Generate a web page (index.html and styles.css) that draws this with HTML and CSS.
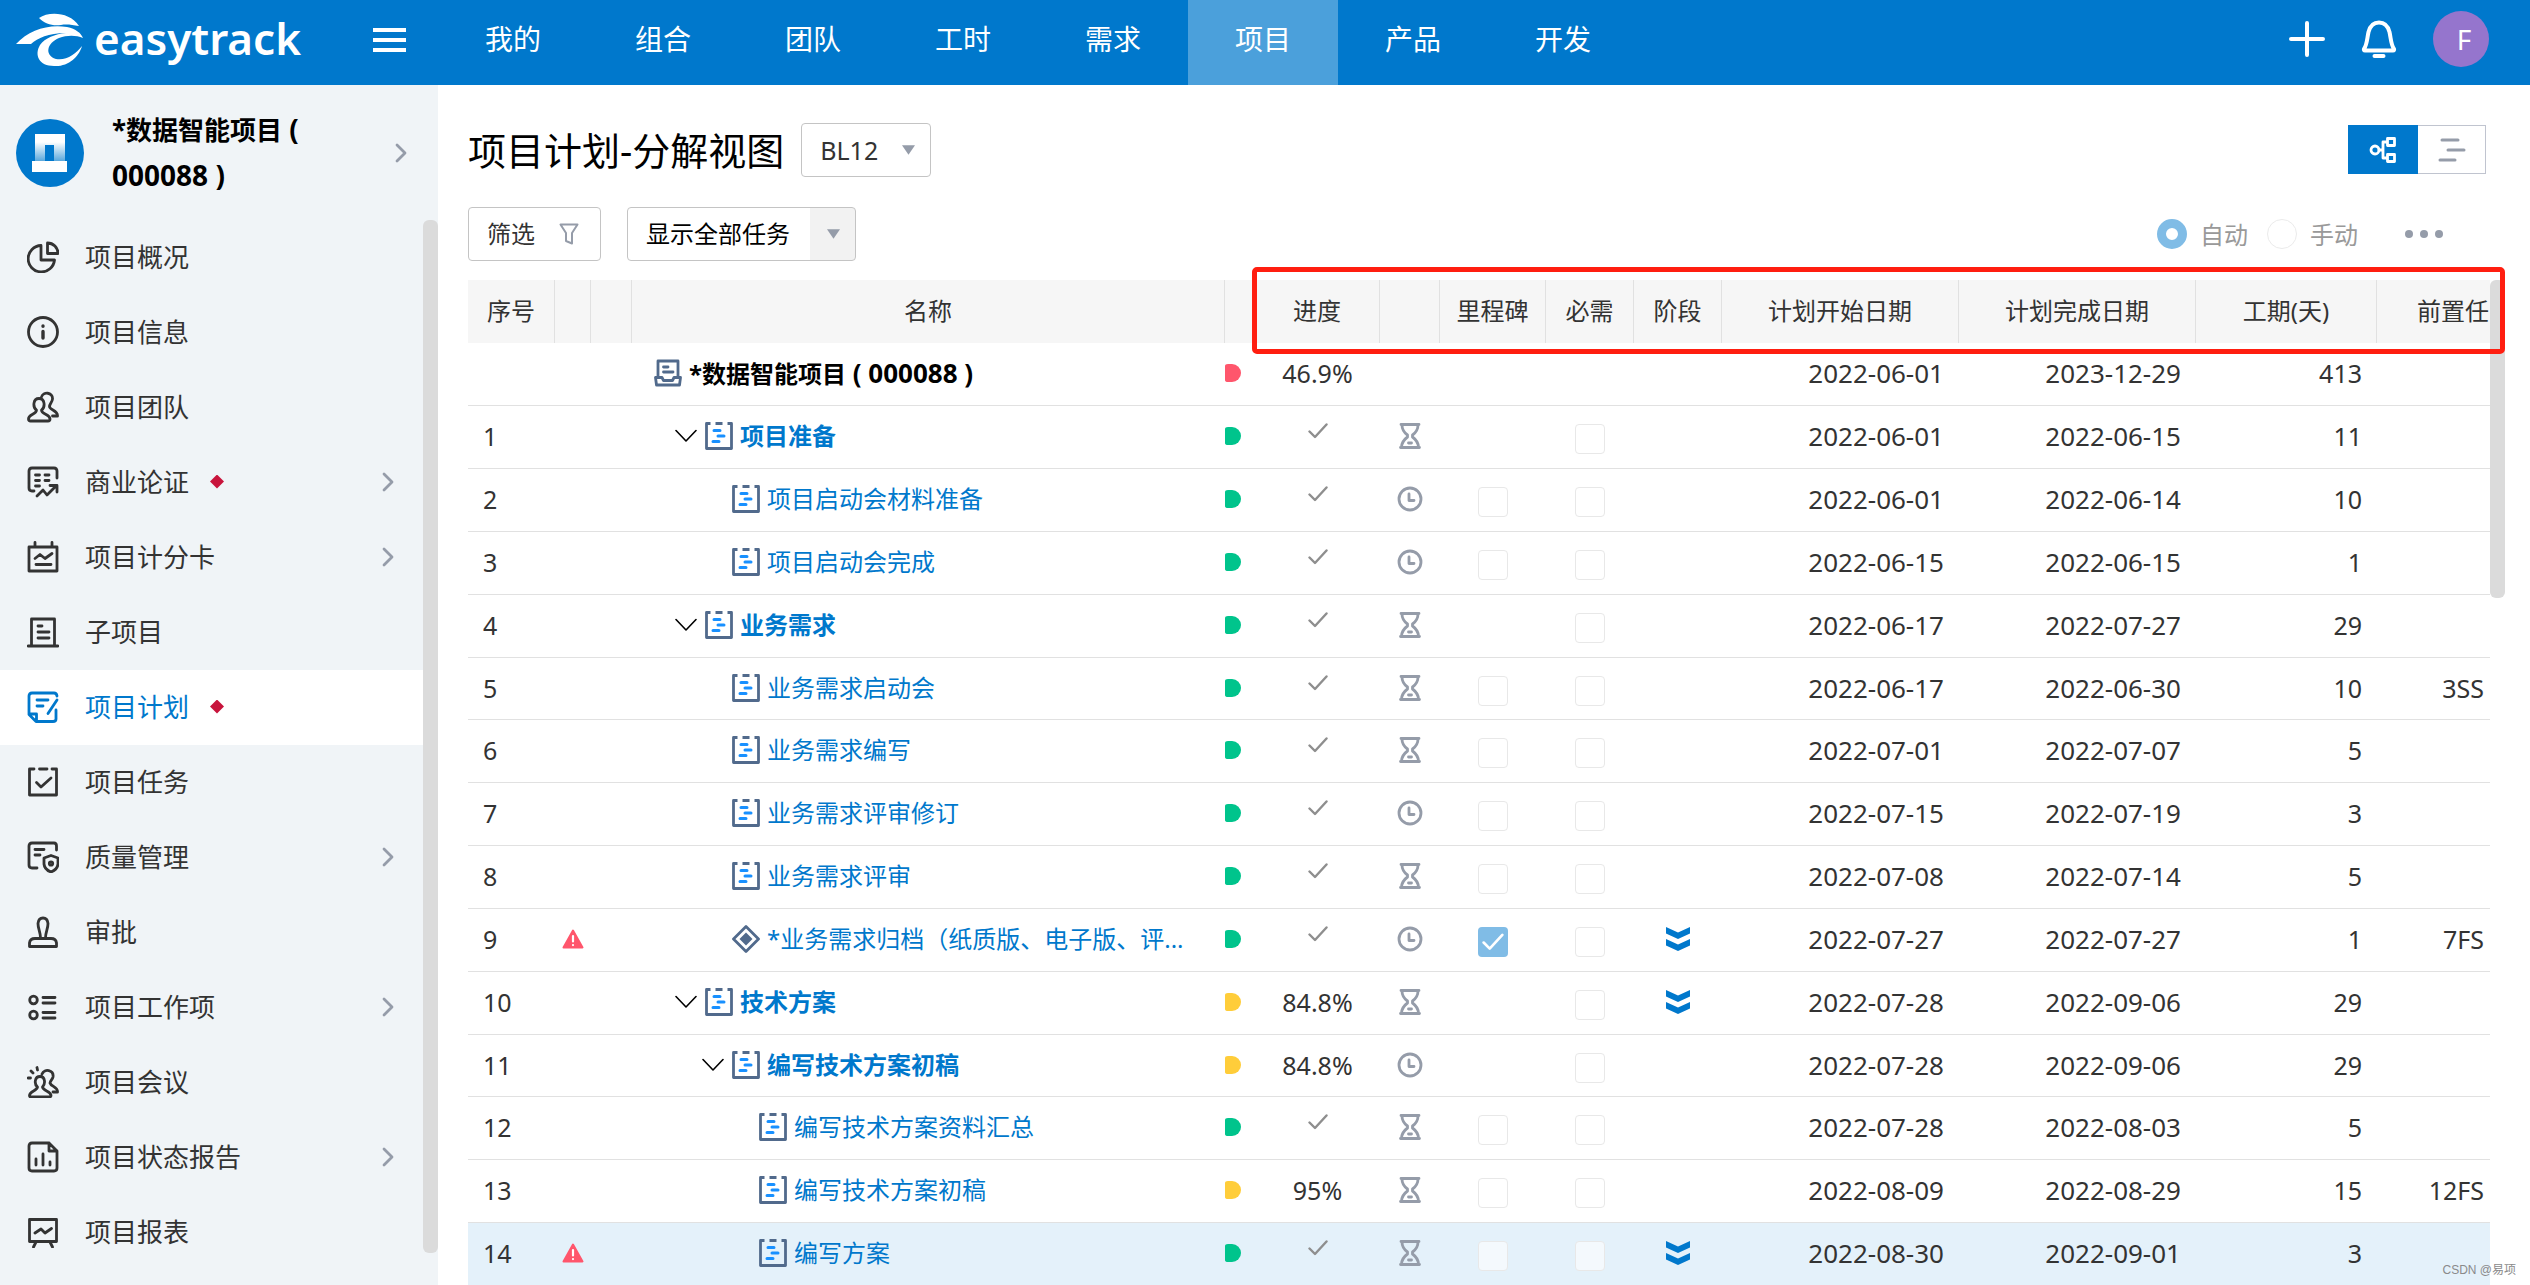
FILE: index.html
```html
<!DOCTYPE html>
<html lang="zh-CN">
<head>
<meta charset="utf-8">
<title>项目计划-分解视图</title>
<link rel="stylesheet" href="styles.css">
</head>
<body>
<svg class="sprite" aria-hidden="true">
  <symbol id="i-pie" viewBox="0 0 32 32"><path d="M14 4.500A13.200 13.200 0 1 0 27.500 19H14zM20.500 2V12.500H31A10.500 10.500 0 0 0 20.500 2z"/></symbol>
  <symbol id="i-info" viewBox="0 0 32 32"><circle cx="16" cy="16" r="14.500"/><path d="M16 15.500V22M16 10V10.200" stroke-width="3.400"/></symbol>
  <symbol id="i-team" viewBox="0 0 32 32"><path d="M9.500 19C5.500 16 6 7.500 12 7.500S18.500 16 14.500 19C14.500 23.500 23 23 23 28Q23 30 21 30H3.500Q1.500 30 1.500 28C1.500 23 9.500 23.500 9.500 19zM14.500 6C16 .5 26 .8 25.500 8C25.300 11 22.500 13 22.500 15.500C22.500 19 31 19.500 30.500 25H25.500"/></symbol>
  <symbol id="i-biz" viewBox="0 0 32 32"><path d="M30 12V5Q30 2 27 2H5Q2 2 2 5V22Q2 25 5 25H7M8.500 9H12.500M18 9H22M8.500 14.500H12.500M18 14.500H22M8.500 20H12.500M10 30L16 24L20 29L29 20M23 19.500H30V26"/></symbol>
  <symbol id="i-score" viewBox="0 0 32 32"><path d="M2 6H30V30H2zM8 1.500V6M25 1.500V6M8 17.500L13 13.500L18 17.500L25 12.500M9 23.500H24"/></symbol>
  <symbol id="i-sub" viewBox="0 0 32 32"><path d="M4.500 30V3H27.500V30M1 30H31M11 10H15M11 16H22M11 22H22"/></symbol>
  <symbol id="i-plan" viewBox="0 0 32 32"><path d="M30 5Q29.500 2 27 2H5Q2 2 2 5V23.500L9 30.500H26Q29 30.500 29 28V19M3 23H9.500V30M10 9H21M10 15H16M30 9L21 22.500"/></symbol>
  <symbol id="i-task" viewBox="0 0 32 32"><path d="M7 3H2.500V29H29.500V3H25M12.500 3H20M9.500 16.500L14 21L24 12"/></symbol>
  <symbol id="i-quality" viewBox="0 0 32 32"><path d="M29.500 9V5Q29.500 2 27 2H5Q2 2 2 5V24Q2 27 5 27H10M8 8.500H17M8 14H13M24 14.500L31 17V23Q30.500 28.500 24 31Q17.500 28.500 17 23V17z"/><circle cx="24" cy="22.500" r="1.700"/></symbol>
  <symbol id="i-stamp" viewBox="0 0 32 32"><path d="M13.500 22C13.500 16 11 13 11 7.500Q11.500 2 16 2T21 7.500C21 13 18.500 16 18.500 22M2.500 30.500V27Q3 22.500 8 22.500H24Q29 22.500 29.500 27V30.500z"/></symbol>
  <symbol id="i-items" viewBox="0 0 32 32"><circle cx="6.500" cy="9" r="3.800"/><circle cx="6.500" cy="24" r="3.800"/><path d="M16 6.500H28M16 12H28M16 21.500H28M16 27H28"/></symbol>
  <symbol id="i-meet" viewBox="0 0 32 32"><path d="M10.500 21C7 18 7.500 10.500 13 10.500S18.500 18 15.500 21C16 25 24 25 24 29.500Q24 31 22 31H4Q2.500 31 2.500 29.500C2.500 25 10 25 10.500 21zM15 8C17.500 2 27 4 26 11C25.500 13.500 23 15 23 17C24 20.500 31 21 30.500 26H26M10 1.500L10.500 4M4 5L6 7M1 12H3.500"/></symbol>
  <symbol id="i-status" viewBox="0 0 32 32"><path d="M22 2H5Q2 2 2 5V27Q2 30 5 30H27Q30 30 30 27V10zV10H30M9 18V24M16 13V24M23 21V24"/></symbol>
  <symbol id="i-report" viewBox="0 0 32 32"><path d="M2.500 3.500H29.500V25.500H2.500zM9 26L6.500 31M23 26L25.500 31M8 17L14 13L18 17L24.500 12.500"/></symbol>
  <symbol id="i-right" viewBox="0 0 12 20"><path d="M2 2L10 10L2 18"/></symbol>
  <symbol id="i-down" viewBox="0 0 22 14"><path d="M1 1.500L11 12L21 1.500" stroke-width="1.600"/></symbol>
  <symbol id="i-caret" viewBox="0 0 14 10"><path d="M0 0H14L7 10z" fill="currentColor" stroke="none"/></symbol>
  <symbol id="i-wbs" viewBox="0 0 28 28"><path d="M5.500 1.500H1.500V26.500H26.500V1.500H22.500M10.500 1.500H17.500" stroke="#516a8c" stroke-width="2.800" stroke-linecap="butt"/><path d="M9 8.500H15M13 14H19M8 19.500H14" stroke="#1890ff" stroke-width="3"/></symbol>
  <symbol id="i-root" viewBox="0 0 28 28"><path d="M4 18V2H24V18M1.500 18.500H8L9.500 21.500H18.500L20 18.500H26.500L25.500 26H2.500zM9.500 8H14M9.500 13H19"/></symbol>
  <symbol id="i-mile" viewBox="0 0 28 28"><path d="M14 1.500L26.500 14L14 26.500L1.500 14z"/><path d="M14 7.500L20.500 14L14 20.500L7.500 14z" fill="currentColor" stroke="none"/></symbol>
  <symbol id="i-tick" viewBox="0 0 20 16"><path d="M1.500 8.500L7 14L18.500 1.500" stroke-width="2.400"/></symbol>
  <symbol id="i-glass" viewBox="0 0 22 26"><path d="M2 1.500H20M3 2Q3 8 8.500 12V14Q3 18 2.500 24M19 2Q19 8 13.500 12V14Q19 18 19.500 24M1.500 24.500H20.500M9.500 20H12.500"/></symbol>
  <symbol id="i-clock" viewBox="0 0 26 26"><circle cx="13" cy="13" r="11"/><path d="M12 8V14.500H17"/></symbol>
  <symbol id="i-phase" viewBox="0 0 24 24"><path d="M0 0L12 5.500L24 0V6.500L12 12L0 6.500zM0 12L12 17.500L24 12V18.500L12 24L0 18.500z" fill="currentColor" stroke="none"/></symbol>
  <symbol id="i-warn" viewBox="0 0 22 20"><path d="M11 1.500L20.500 18.500H1.500z" fill="#ff566c" stroke="#ff566c" stroke-width="2"/><path d="M11 7V12.500M11 16V16.100" stroke="#fff" stroke-width="2.200"/></symbol>
</svg>

<div class="app">
  <header class="topbar">
    <div class="brand">
      <a class="logo" href="#" aria-label="easytrack">
        <svg width="68" height="54" viewBox="0 0 68 54"><g fill="#fff"><path d="M23 5C33-2 54-1 63 13C56 12 51 11 45 12C36 13 29 11 23 5z"/><path d="M0 31C13 17 32 11 51 14C60 16 65 20 67 25C60 22 51 22 43 25C31 30 28 42 40 46C50 48 60 41 66 33C63 44 52 54 38 53C23 53 18 42 24 32C29 25 39 21 50 20C32 20 22 25 15 31z"/></g></svg>
        <span class="logo-text">easytrack</span>
      </a>
      <button class="menu-btn" aria-label="菜单"><i></i><i></i><i></i></button>
    </div>
    <nav class="topnav">
      <a href="#">我的</a><a href="#">组合</a><a href="#">团队</a><a href="#">工时</a><a href="#">需求</a><a href="#" class="on">项目</a><a href="#">产品</a><a href="#">开发</a>
    </nav>
    <div class="tools">
      <button aria-label="新建"><svg class="ic" width="36" height="36" viewBox="0 0 36 36"><path d="M18 2V34M2 18H34" stroke-width="4"/></svg></button>
      <button aria-label="通知"><svg class="ic" width="36" height="38" viewBox="0 0 36 38"><path d="M3 29C6 25 6 19 7.500 12Q10 2.500 18 2.500T28.500 12C30 19 30 25 33 29Q33.500 30.500 32 30.500H4Q2.500 30.500 3 29zM13.500 36H22.500" stroke-width="4"/></svg></button>
      <button class="avatar">F</button>
    </div>
  </header>

  <div class="body">
    <aside class="sidebar">
      <a class="project" href="#">
        <svg width="68" height="68" viewBox="0 0 68 68"><defs><linearGradient id="g" x2="0" y2="1"><stop offset=".3" stop-color="#fff"/><stop offset="1" stop-color="#5aa8dd"/></linearGradient></defs><circle cx="34" cy="34" r="34" fill="#0078cc"/><path d="M19 15H49V42H38V26H29V42H19z" fill="url(#g)"/><path d="M16 42H51V53H16z" fill="#fff"/></svg>
        <b class="project-name">*数据智能项目<span class="latin"> (<br>000088 )</span></b>
        <svg class="ic go" width="14" height="22"><use href="#i-right"/></svg>
      </a>
      <div class="side-scroll">
        <nav class="menu">
          <a href="#"><svg class="ic mi"><use href="#i-pie"/></svg><span>项目概况</span></a>
          <a href="#"><svg class="ic mi"><use href="#i-info"/></svg><span>项目信息</span></a>
          <a href="#"><svg class="ic mi"><use href="#i-team"/></svg><span>项目团队</span></a>
          <a href="#"><svg class="ic mi"><use href="#i-biz"/></svg><span>商业论证</span><i class="mark"></i><svg class="ic go"><use href="#i-right"/></svg></a>
          <a href="#"><svg class="ic mi"><use href="#i-score"/></svg><span>项目计分卡</span><svg class="ic go"><use href="#i-right"/></svg></a>
          <a href="#"><svg class="ic mi"><use href="#i-sub"/></svg><span>子项目</span></a>
          <a href="#" class="on"><svg class="ic mi"><use href="#i-plan"/></svg><span>项目计划</span><i class="mark"></i></a>
          <a href="#"><svg class="ic mi"><use href="#i-task"/></svg><span>项目任务</span></a>
          <a href="#"><svg class="ic mi"><use href="#i-quality"/></svg><span>质量管理</span><svg class="ic go"><use href="#i-right"/></svg></a>
          <a href="#"><svg class="ic mi"><use href="#i-stamp"/></svg><span>审批</span></a>
          <a href="#"><svg class="ic mi"><use href="#i-items"/></svg><span>项目工作项</span><svg class="ic go"><use href="#i-right"/></svg></a>
          <a href="#"><svg class="ic mi"><use href="#i-meet"/></svg><span>项目会议</span></a>
          <a href="#"><svg class="ic mi"><use href="#i-status"/></svg><span>项目状态报告</span><svg class="ic go"><use href="#i-right"/></svg></a>
          <a href="#"><svg class="ic mi"><use href="#i-report"/></svg><span>项目报表</span></a>
        </nav>
        <div class="bar side-bar"></div>
      </div>
    </aside>

    <main class="main">
      <div class="title-row">
        <h1>项目计划-分解视图</h1>
        <div class="pick pick-base">
          <select aria-label="基线"><option>BL12</option></select>
          <svg class="caret"><use href="#i-caret"/></svg>
        </div>
        <div class="views">
          <button class="on" aria-label="分解视图"><svg class="ic" width="28" height="28" viewBox="0 0 28 28"><circle cx="6" cy="14" r="4"/><path d="M10 14H14M18 6H14V22H18M18.500 2.500H25.500V9.500H18.500zM18.500 18.500H25.500V25.500H18.500z"/></svg></button>
          <button aria-label="甘特图"><svg class="ic" width="28" height="28" viewBox="0 0 28 28"><path d="M4 4H20M10 14H26M2 24H17" stroke-width="3"/></svg></button>
        </div>
      </div>
      <div class="toolbar">
        <button class="filter">筛选<svg class="ic" width="20" height="22" viewBox="0 0 20 22"><path d="M1.500 1.500H18.500L13 10V20.500L7 18V10z" stroke-width="2"/></svg></button>
        <div class="pick pick-scope">
          <select aria-label="任务范围"><option>显示全部任务</option></select>
          <svg class="caret"><use href="#i-caret"/></svg>
        </div>
        <div class="modes">
          <input type="radio" name="mode" id="auto" checked disabled><label for="auto">自动</label>
          <input type="radio" name="mode" id="manual" disabled><label for="manual">手动</label>
          <button class="more" aria-label="更多"><i></i><i></i><i></i></button>
        </div>
      </div>

      <div class="grid">
        <div class="grid-clip">
        <table>
          <colgroup><col class="w-no"><col class="w-a"><col class="w-b"><col><col class="w-st"><col class="w-pr"><col class="w-ty"><col class="w-ms"><col class="w-ph"><col class="w-ph"><col class="w-d"><col class="w-d"><col class="w-du"><col class="w-pre"></colgroup>
          <thead><tr><th>序号</th><th></th><th></th><th>名称</th><th></th><th>进度</th><th></th><th>里程碑</th><th>必需</th><th>阶段</th><th>计划开始日期</th><th>计划完成日期</th><th>工期(天)</th><th class="pre">前置任</th></tr></thead>
          <tbody>
          <tr><td></td><td></td><td></td><td><div class="name root"><svg class="ic ti"><use href="#i-root"/></svg><b>*数据智能项目<span class="latin"> ( 000088 )</span></b></div></td><td><i class="st red"></i></td><td>46.9%</td><td></td><td></td><td></td><td></td><td>2022-06-01</td><td>2023-12-29</td><td>413</td><td></td></tr>
          <tr><td>1</td><td></td><td></td><td><div class="name l1"><svg class="ic dn"><use href="#i-down"/></svg><svg class="ic ti"><use href="#i-wbs"/></svg><a href="#"><b>项目准备</b></a></div></td><td><i class="st"></i></td><td><svg class="ic tick"><use href="#i-tick"/></svg></td><td><svg class="ic ty"><use href="#i-glass"/></svg></td><td></td><td><input type="checkbox" aria-label="必需" disabled></td><td></td><td>2022-06-01</td><td>2022-06-15</td><td>11</td><td></td></tr>
          <tr><td>2</td><td></td><td></td><td><div class="name l2"><svg class="ic ti"><use href="#i-wbs"/></svg><a href="#">项目启动会材料准备</a></div></td><td><i class="st"></i></td><td><svg class="ic tick"><use href="#i-tick"/></svg></td><td><svg class="ic ty"><use href="#i-clock"/></svg></td><td><input type="checkbox" aria-label="里程碑" disabled></td><td><input type="checkbox" aria-label="必需" disabled></td><td></td><td>2022-06-01</td><td>2022-06-14</td><td>10</td><td></td></tr>
          <tr><td>3</td><td></td><td></td><td><div class="name l2"><svg class="ic ti"><use href="#i-wbs"/></svg><a href="#">项目启动会完成</a></div></td><td><i class="st"></i></td><td><svg class="ic tick"><use href="#i-tick"/></svg></td><td><svg class="ic ty"><use href="#i-clock"/></svg></td><td><input type="checkbox" aria-label="里程碑" disabled></td><td><input type="checkbox" aria-label="必需" disabled></td><td></td><td>2022-06-15</td><td>2022-06-15</td><td>1</td><td></td></tr>
          <tr><td>4</td><td></td><td></td><td><div class="name l1"><svg class="ic dn"><use href="#i-down"/></svg><svg class="ic ti"><use href="#i-wbs"/></svg><a href="#"><b>业务需求</b></a></div></td><td><i class="st"></i></td><td><svg class="ic tick"><use href="#i-tick"/></svg></td><td><svg class="ic ty"><use href="#i-glass"/></svg></td><td></td><td><input type="checkbox" aria-label="必需" disabled></td><td></td><td>2022-06-17</td><td>2022-07-27</td><td>29</td><td></td></tr>
          <tr><td>5</td><td></td><td></td><td><div class="name l2"><svg class="ic ti"><use href="#i-wbs"/></svg><a href="#">业务需求启动会</a></div></td><td><i class="st"></i></td><td><svg class="ic tick"><use href="#i-tick"/></svg></td><td><svg class="ic ty"><use href="#i-glass"/></svg></td><td><input type="checkbox" aria-label="里程碑" disabled></td><td><input type="checkbox" aria-label="必需" disabled></td><td></td><td>2022-06-17</td><td>2022-06-30</td><td>10</td><td>3SS</td></tr>
          <tr><td>6</td><td></td><td></td><td><div class="name l2"><svg class="ic ti"><use href="#i-wbs"/></svg><a href="#">业务需求编写</a></div></td><td><i class="st"></i></td><td><svg class="ic tick"><use href="#i-tick"/></svg></td><td><svg class="ic ty"><use href="#i-glass"/></svg></td><td><input type="checkbox" aria-label="里程碑" disabled></td><td><input type="checkbox" aria-label="必需" disabled></td><td></td><td>2022-07-01</td><td>2022-07-07</td><td>5</td><td></td></tr>
          <tr><td>7</td><td></td><td></td><td><div class="name l2"><svg class="ic ti"><use href="#i-wbs"/></svg><a href="#">业务需求评审修订</a></div></td><td><i class="st"></i></td><td><svg class="ic tick"><use href="#i-tick"/></svg></td><td><svg class="ic ty"><use href="#i-clock"/></svg></td><td><input type="checkbox" aria-label="里程碑" disabled></td><td><input type="checkbox" aria-label="必需" disabled></td><td></td><td>2022-07-15</td><td>2022-07-19</td><td>3</td><td></td></tr>
          <tr><td>8</td><td></td><td></td><td><div class="name l2"><svg class="ic ti"><use href="#i-wbs"/></svg><a href="#">业务需求评审</a></div></td><td><i class="st"></i></td><td><svg class="ic tick"><use href="#i-tick"/></svg></td><td><svg class="ic ty"><use href="#i-glass"/></svg></td><td><input type="checkbox" aria-label="里程碑" disabled></td><td><input type="checkbox" aria-label="必需" disabled></td><td></td><td>2022-07-08</td><td>2022-07-14</td><td>5</td><td></td></tr>
          <tr><td>9</td><td><svg class="ic warn"><use href="#i-warn"/></svg></td><td></td><td><div class="name l2"><svg class="ic ti"><use href="#i-mile"/></svg><a href="#">*业务需求归档（纸质版、电子版、评...</a></div></td><td><i class="st"></i></td><td><svg class="ic tick"><use href="#i-tick"/></svg></td><td><svg class="ic ty"><use href="#i-clock"/></svg></td><td><span class="checked"><input type="checkbox" aria-label="里程碑" checked disabled><svg class="ic"><use href="#i-tick"/></svg></span></td><td><input type="checkbox" aria-label="必需" disabled></td><td><svg class="ic phase"><use href="#i-phase"/></svg></td><td>2022-07-27</td><td>2022-07-27</td><td>1</td><td>7FS</td></tr>
          <tr><td>10</td><td></td><td></td><td><div class="name l1"><svg class="ic dn"><use href="#i-down"/></svg><svg class="ic ti"><use href="#i-wbs"/></svg><a href="#"><b>技术方案</b></a></div></td><td><i class="st amber"></i></td><td>84.8%</td><td><svg class="ic ty"><use href="#i-glass"/></svg></td><td></td><td><input type="checkbox" aria-label="必需" disabled></td><td><svg class="ic phase"><use href="#i-phase"/></svg></td><td>2022-07-28</td><td>2022-09-06</td><td>29</td><td></td></tr>
          <tr><td>11</td><td></td><td></td><td><div class="name l1 deep"><svg class="ic dn"><use href="#i-down"/></svg><svg class="ic ti"><use href="#i-wbs"/></svg><a href="#"><b>编写技术方案初稿</b></a></div></td><td><i class="st amber"></i></td><td>84.8%</td><td><svg class="ic ty"><use href="#i-clock"/></svg></td><td></td><td><input type="checkbox" aria-label="必需" disabled></td><td></td><td>2022-07-28</td><td>2022-09-06</td><td>29</td><td></td></tr>
          <tr><td>12</td><td></td><td></td><td><div class="name l3"><svg class="ic ti"><use href="#i-wbs"/></svg><a href="#">编写技术方案资料汇总</a></div></td><td><i class="st"></i></td><td><svg class="ic tick"><use href="#i-tick"/></svg></td><td><svg class="ic ty"><use href="#i-glass"/></svg></td><td><input type="checkbox" aria-label="里程碑" disabled></td><td><input type="checkbox" aria-label="必需" disabled></td><td></td><td>2022-07-28</td><td>2022-08-03</td><td>5</td><td></td></tr>
          <tr><td>13</td><td></td><td></td><td><div class="name l3"><svg class="ic ti"><use href="#i-wbs"/></svg><a href="#">编写技术方案初稿</a></div></td><td><i class="st amber"></i></td><td>95%</td><td><svg class="ic ty"><use href="#i-glass"/></svg></td><td><input type="checkbox" aria-label="里程碑" disabled></td><td><input type="checkbox" aria-label="必需" disabled></td><td></td><td>2022-08-09</td><td>2022-08-29</td><td>15</td><td>12FS</td></tr>
          <tr class="hover"><td>14</td><td><svg class="ic warn"><use href="#i-warn"/></svg></td><td></td><td><div class="name l3"><svg class="ic ti"><use href="#i-wbs"/></svg><a href="#">编写方案</a></div></td><td><i class="st"></i></td><td><svg class="ic tick"><use href="#i-tick"/></svg></td><td><svg class="ic ty"><use href="#i-glass"/></svg></td><td><input type="checkbox" aria-label="里程碑" disabled></td><td><input type="checkbox" aria-label="必需" disabled></td><td><svg class="ic phase"><use href="#i-phase"/></svg></td><td>2022-08-30</td><td>2022-09-01</td><td>3</td><td></td></tr>
          </tbody>
        </table>
        </div>
        <div class="bar grid-bar"></div>
        <div class="callout"></div>
      </div>
    </main>
  </div>
  <div class="watermark">CSDN @易项</div>
</div>
</body>
</html>
```
FILE: styles.css
```css
:root {
  --blue: #0078cc;
  --grey: #959ca9;
  --line: #e1e1e1;
  --ink: #333;
}

* { box-sizing: border-box; }

body {
  margin: 0;
  background: #fff;
  color: var(--ink);
  font: 24px/32px "Noto Sans", "Noto Sans CJK SC", sans-serif;
}

a { color: inherit; text-decoration: none; }

button, select, input {
  margin: 0;
  padding: 0;
  font: inherit;
  color: inherit;
  appearance: none;
  background: none;
  border: 0;
}

.sprite { display: none; }

.ic {
  display: block;
  flex: none;
  fill: none;
  stroke: currentColor;
  stroke-width: 2.8;
  stroke-linecap: round;
  stroke-linejoin: round;
}

.latin { font-size: 26px; }

.app {
  position: relative;
  display: flex;
  flex-direction: column;
  height: 100vh;
  overflow: hidden;
}

/* top bar */
.topbar {
  display: flex;
  align-items: center;
  flex: none;
  height: 85px;
  background: var(--blue);
  color: #fff;
}

.brand {
  display: flex;
  align-items: center;
  justify-content: space-between;
  width: 438px;
  padding: 0 32px 6px 16px;
}

.logo { display: flex; align-items: center; gap: 10px; }

.logo-text { padding-bottom: 3px; font-size: 44px; line-height: 54px; font-weight: 600; }

.menu-btn { display: grid; gap: 6px; width: 33px; }

.menu-btn i { height: 4px; background: #fff; }

.topnav { display: flex; flex: 1; align-self: stretch; }

.topnav a {
  display: grid;
  place-items: center;
  width: 150px;
  padding-bottom: 8px;
  font-size: 28px;
}

.topnav .on { background: #4ba0db; }

.tools {
  display: flex;
  align-items: center;
  gap: 36px;
  padding: 0 41px 8px 0;
}

.avatar {
  width: 56px;
  height: 56px;
  padding-left: 6px;
  border-radius: 50%;
  background: #9575cd;
  font-size: 28px;
}

.body { display: flex; flex: 1; min-height: 0; }

/* sidebar */
.sidebar {
  display: flex;
  flex-direction: column;
  flex: none;
  width: 438px;
  background: #f0f4f7;
}

.project {
  display: flex;
  align-items: center;
  flex: none;
  height: 135px;
  padding: 0 31px 0 16px;
  color: #000;
}

.project-name {
  margin-left: 28px;
  font-size: 26px;
  line-height: 45px;
}

.project-name .latin { font-size: 28px; }

.go { width: 12px; height: 20px; margin-left: auto; color: var(--grey); }

.side-scroll { display: flex; flex: 1; min-height: 0; overflow: hidden; }

.menu { flex: 1; }

.menu a {
  display: flex;
  align-items: center;
  height: 75px;
  padding: 0 29px 2px 27px;
  font-size: 26px;
}

.menu .on { background: #fff; color: var(--blue); }

.mi { width: 32px; height: 32px; margin-right: 26px; }

.mark {
  width: 14px;
  height: 14px;
  margin-left: 21px;
  background: #c8143c;
  clip-path: polygon(50% 0, 100% 50%, 50% 100%, 0 50%);
}

.bar { width: 15px; border-radius: 6px; background: #dbdbdb; }

.side-bar { margin-bottom: 32px; }

/* main area */
.main {
  display: flex;
  flex-direction: column;
  flex: 1;
  min-width: 0;
  padding: 37px 25px 0 30px;
}

.title-row { display: flex; align-items: center; flex: none; height: 55px; }

h1 {
  margin: 0 17px 0 0;
  color: #000;
  font-size: 38px;
  font-weight: 400;
  line-height: 54px;
}

.pick { position: relative; display: flex; height: 54px; }

.pick select {
  width: 100%;
  padding: 0 18px;
  border: 1px solid #c4c4c4;
  border-radius: 4px;
}

.pick-base { width: 130px; }

.pick-base select { font-size: 25px; }

.pick-scope { width: 229px; margin-left: 26px; }

.pick-scope select {
  color: #000;
  background: linear-gradient(#f2f2f2, #f2f2f2) right / 45px no-repeat;
}

.caret {
  position: absolute;
  top: 22px;
  right: 16px;
  width: 13px;
  height: 10px;
  color: var(--grey);
  pointer-events: none;
}

.views { display: flex; height: 49px; margin: 0 19px 0 auto; }

.views button {
  display: grid;
  place-items: center;
  width: 68px;
  border: 1px solid #c0c4cf;
  border-left: 0;
  color: var(--grey);
}

.views .on { width: 70px; border: 0; background: var(--blue); color: #fff; }

.toolbar { display: flex; align-items: center; flex: none; margin: 30px 0 19px; }

.filter {
  display: flex;
  align-items: center;
  gap: 24px;
  height: 54px;
  padding: 0 21px 0 18px;
  border: 1px solid #c4c4c4;
  border-radius: 4px;
}

.filter .ic { color: var(--grey); }

.modes { display: flex; align-items: center; margin-left: auto; color: #999; }

.modes input {
  width: 30px;
  height: 30px;
  border: 1px solid #ebebeb;
  border-radius: 50%;
}

.modes input:checked { border: 9px solid #80bce6; }

.modes label { margin: 2px 19px 0 13px; }

.more { display: flex; gap: 7px; margin: 0 62px 0 28px; }

.more i { width: 8px; height: 8px; border-radius: 50%; background: var(--grey); }

/* task grid */
.grid { position: relative; display: flex; flex: 1; min-height: 0; }

.grid-clip { flex: 1; min-width: 0; overflow: hidden; }

.grid-bar { height: 318px; }

.callout {
  position: absolute;
  top: -13px;
  right: 0;
  width: 1253px;
  height: 87px;
  border: 5px solid #ff1e10;
  border-radius: 5px;
  pointer-events: none;
}

table {
  width: 100%;
  table-layout: fixed;
  border-collapse: separate;
  border-spacing: 0;
}

.w-no { width: 87px; }
.w-a { width: 36px; }
.w-b { width: 41px; }
.w-st { width: 30px; }
.w-pr { width: 125px; }
.w-ty { width: 60px; }
.w-ms { width: 106px; }
.w-ph { width: 88px; }
.w-d { width: 237px; }
.w-du { width: 181px; }
.w-pre { width: 113px; }

th {
  height: 63px;
  padding: 0 0 2px;
  border-right: 1px solid var(--line);
  background: #f6f6f6;
  font-weight: 400;
  white-space: nowrap;
}

th.pre { padding-left: 40px; border: 0; text-align: left; }

td {
  height: 63px;
  padding: 0 0 2px;
  border-bottom: 1px solid var(--line);
  font-size: 25px;
  text-align: center;
}

tr:nth-child(6n) td { height: 62px; }

td:first-child { padding-left: 15px; text-align: left; }

td:nth-child(11), td:nth-child(12) { padding-right: 15px; font-size: 26px; text-align: right; }

td:nth-child(13) { padding-right: 15px; text-align: right; }

td:nth-child(14) { padding-right: 6px; text-align: right; }

td > .ic { margin: 0 auto; }

.hover td { background: #e4f1fa; }

.name { display: flex; align-items: center; font-size: 24px; white-space: nowrap; }

.name a { color: var(--blue); }

.root { padding-left: 22px; color: #000; }
.l1 { padding-left: 43px; }
.deep { padding-left: 70px; }
.l2 { padding-left: 100px; }
.l3 { padding-left: 127px; }

.ti { width: 28px; height: 28px; margin-right: 7px; color: #516a8c; }

.dn { width: 22px; height: 14px; margin-right: 8px; color: #000; }

.st {
  display: block;
  width: 16px;
  height: 18px;
  border-radius: 3px 9px 9px 3px / 2px 9px 9px 2px;
  background: #00c48c;
}

.red { background: #ff566c; }
.amber { background: #ffcd3a; }

td > .tick { width: 20px; height: 16px; margin-bottom: 10px; color: #8e8e8e; }

.ty { width: 26px; height: 26px; color: var(--grey); }

.warn { width: 22px; height: 20px; }

td > .phase { width: 24px; height: 24px; color: var(--blue); }

td input {
  display: block;
  width: 30px;
  height: 30px;
  margin: 6px auto 0;
  border: 1px solid #e8e8e8;
  border-radius: 4px;
  background: rgba(255, 255, 255, .6);
}

.checked { display: grid; justify-content: center; align-items: center; }

.checked > * { grid-area: 1 / 1; }

.checked input { border: 0; background: #80bce6; }

.checked .ic { width: 22px; height: 20px; margin: 6px auto 0; color: #fff; }

.watermark {
  position: absolute;
  right: 14px;
  bottom: 6px;
  color: #8a8a8a;
  font: 12px/18px "Liberation Sans", "Noto Sans CJK SC", sans-serif;
}
```
